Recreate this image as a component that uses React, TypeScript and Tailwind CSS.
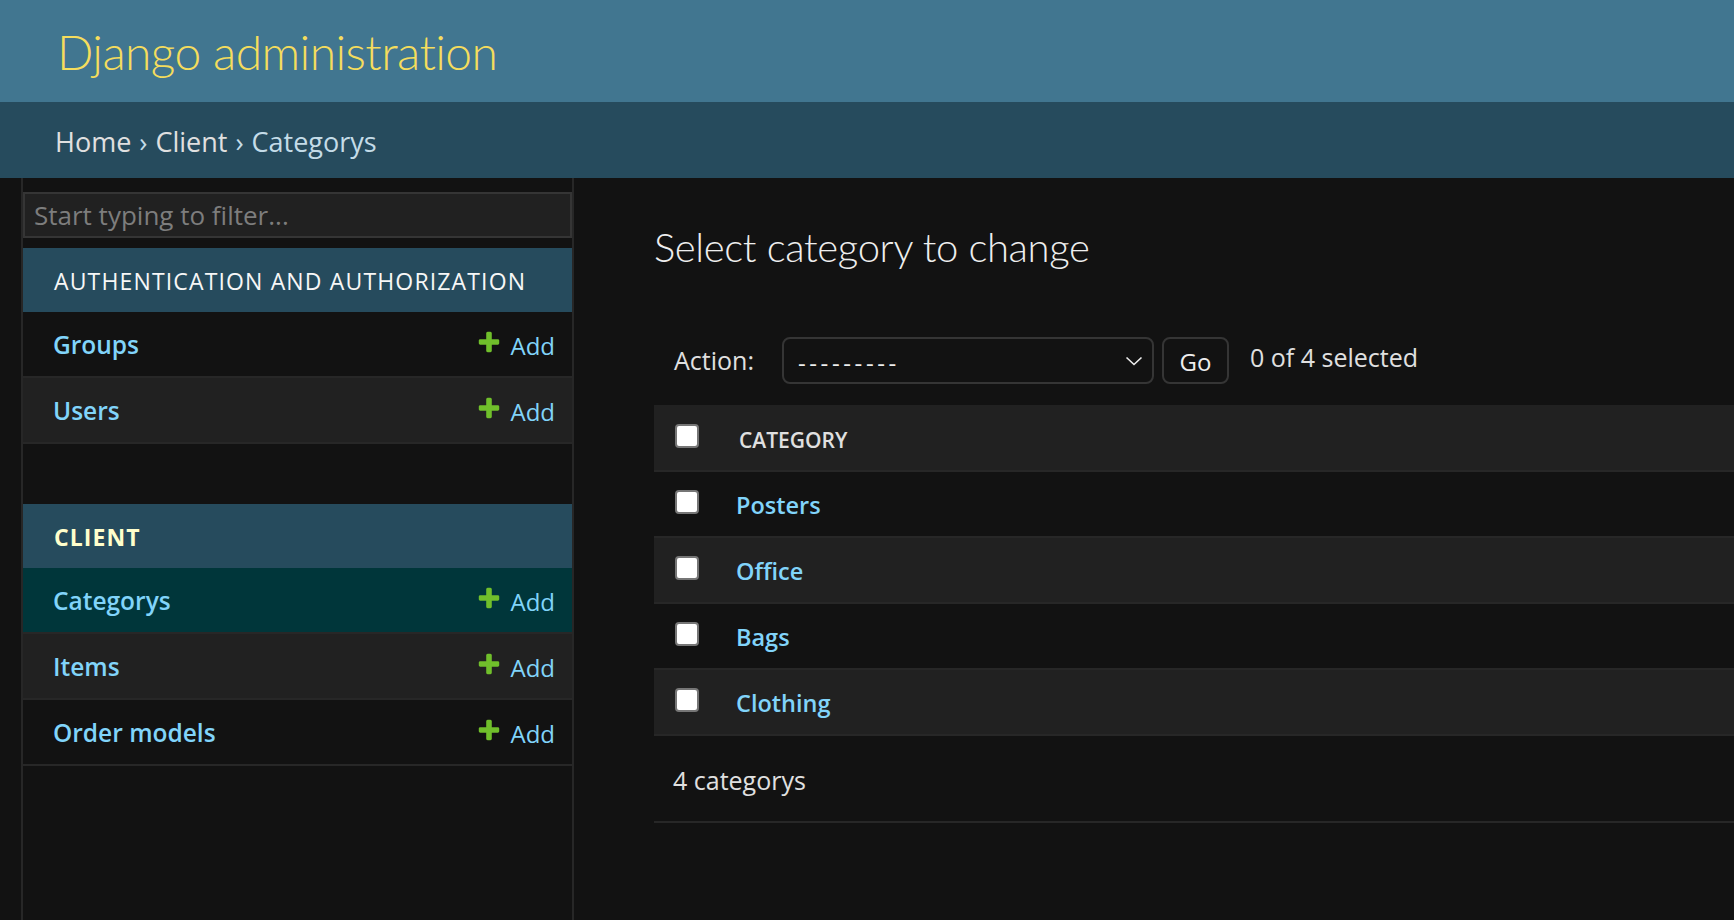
import React from 'react';

const PlusIcon: React.FC = () => (
  <svg width="26" height="26" viewBox="0 0 1792 1792" className="shrink-0 -mt-[8px]">
    <path
      fill="#70bf2b"
      d="M1600 796v192q0 40-28 68t-68 28h-416v416q0 40-28 68t-68 28h-192q-40 0-68-28t-28-68v-416h-416q-40 0-68-28t-28-68v-192q0-40 28-68t68-28h416v-416q0-40 28-68t68-28h192q40 0 68 28t28 68v416h416q40 0 68 28t28 68z"
    />
  </svg>
);

interface ModelRow {
  name: string;
  current?: boolean;
}

const SidebarModule: React.FC<{ title: string; current?: boolean; rows: ModelRow[] }> = ({ title, current, rows }) => (
  <div>
    <div className="h-[64px] bg-[#264b5d] flex items-center pl-[31px] pt-[2px]">
      <span
        className={
          current
            ? 'text-[23px] font-bold tracking-[1.1px] text-[#ffffcc]'
            : 'text-[23px] font-normal tracking-[1.15px] text-[#f7f7f7]'
        }
      >
        {title}
      </span>
    </div>
    {rows.map((row, i) => (
      <div
        key={row.name}
        className={`h-[66px] border-b-2 border-[#272727] flex items-center justify-between pl-[30px] pr-[17px] pt-[3px] ${
          row.current ? 'bg-[#00363a]' : i % 2 === 1 ? 'bg-[#212121]' : 'bg-[#121212]'
        }`}
      >
        <span className="text-[24.5px] font-semibold text-[#81d4fa]">{row.name}</span>
        <span className="flex items-center gap-[8px] text-[24px] text-[#81d4fa]">
          <PlusIcon />
          Add
        </span>
      </div>
    ))}
  </div>
);

const Checkbox: React.FC = () => (
  <div className="w-[24px] h-[24px] rounded-[4px] bg-white border-2 border-[#767676]" />
);

const App: React.FC = () => {
  const categories = ['Posters', 'Office', 'Bags', 'Clothing'];

  return (
    <div className="min-h-screen bg-[#121212] font-['Open_Sans',sans-serif] text-[#eeeeee] overflow-hidden">
      <header className="h-[102px] bg-[#417690] flex items-center pl-[57px] pt-[2px]">
        <h1 className="font-['Lato',sans-serif] [font-variant-ligatures:none] text-[48px] tracking-[-0.6px] font-light leading-none text-[#f5dd5d]">
          Django administration
        </h1>
      </header>

      <div className="h-[76px] bg-[#264b5d] flex items-center pl-[55px] pt-[4px] text-[27px] text-[#c4dce8]">
        <span className="text-[#e0e0e0]">Home</span>
        <span className="mx-[8px]">›</span>
        <span className="text-[#e0e0e0]">Client</span>
        <span className="mx-[8px]">›</span>
        <span>Categorys</span>
      </div>

      <div className="flex min-h-[742px]">
        <div className="w-[23px] shrink-0 border-r-2 border-[#272727]" />

        <aside className="w-[551px] shrink-0 border-r-2 border-[#272727]">
          <div className="pt-[14px] pb-[10px]">
            <input
              placeholder="Start typing to filter..."
              className="w-full h-[46px] bg-[#212121] border-2 border-[#353535] px-[9px] text-[26px] text-[#eeeeee] placeholder:text-[#7d7d7d] outline-none"
            />
          </div>

          <SidebarModule
            title="AUTHENTICATION AND AUTHORIZATION"
            rows={[{ name: 'Groups' }, { name: 'Users' }]}
          />

          <div className="h-[60px]" />

          <SidebarModule
            title="CLIENT"
            current
            rows={[{ name: 'Categorys', current: true }, { name: 'Items' }, { name: 'Order models' }]}
          />
        </aside>

        <main className="flex-1 pl-[80px] pt-[49px]">
          <h2 className="font-['Lato',sans-serif] [font-variant-ligatures:none] text-[40px] tracking-[-0.35px] leading-[41px] font-light text-[#eeeeee]">
            Select category to change
          </h2>

          <div className="mt-[69px] h-[47px] flex items-center pl-[20px]">
            <span className="text-[25px] text-[#e0e0e0]">Action:</span>
            <div className="ml-[28px] w-[372px] h-[47px] rounded-[8px] border-2 border-[#353535] bg-[#121212] flex items-center justify-between pl-[14px] pr-[9px]">
              <span className="text-[24px] tracking-[3.6px] text-[#eeeeee] mt-[4px]">---------</span>
              <svg width="18" height="10" viewBox="0 0 18 10">
                <polyline points="1.5,1.5 9,8.5 16.5,1.5" fill="none" stroke="#eeeeee" strokeWidth="1.6" />
              </svg>
            </div>
            <div className="ml-[8px] w-[67px] h-[47px] rounded-[8px] border-2 border-[#353535] bg-[#121212] flex items-center justify-center">
              <span className="text-[24px] text-[#eeeeee] mt-[3px]">Go</span>
            </div>
            <span className="ml-[21px] text-[25px] text-[#e0e0e0] -mt-[5px]">0 of 4 selected</span>
          </div>

          <div className="mt-[21px]">
            <div className="h-[67px] bg-[#212121] border-b-2 border-[#272727] flex">
              <div className="w-[82px] pl-[21px] pt-[19px]">
                <Checkbox />
              </div>
              <div className="flex items-center pl-[3px] pt-[7px] text-[21px] font-semibold text-[#e0e0e0]">
                CATEGORY
              </div>
            </div>
            {categories.map((c, i) => (
              <div
                key={c}
                className={`h-[66px] border-b-2 border-[#272727] flex ${i % 2 === 1 ? 'bg-[#212121]' : 'bg-[#121212]'}`}
              >
                <div className="w-[82px] pl-[21px] pt-[18px]">
                  <Checkbox />
                </div>
                <div className="flex items-center pt-[3px] text-[23.5px] font-semibold text-[#81d4fa]">{c}</div>
              </div>
            ))}
            <div className="h-[87px] border-b-2 border-[#272727] flex items-center pl-[19px] pt-[4px] text-[25px] text-[#e0e0e0]">
              4 categorys
            </div>
          </div>
        </main>
      </div>
    </div>
  );
};

export default App;
